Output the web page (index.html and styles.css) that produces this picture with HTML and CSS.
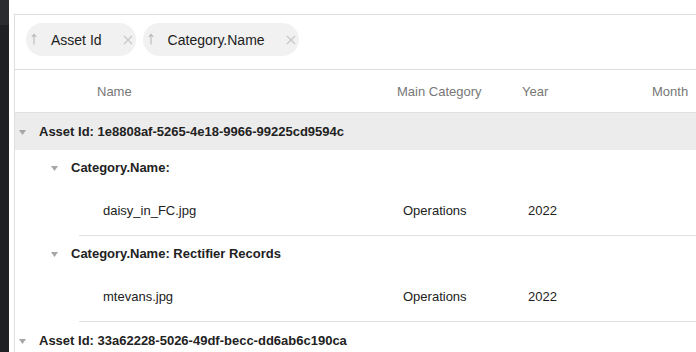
FILE: index.html
```html
<!DOCTYPE html>
<html>
<head>
<meta charset="utf-8">
<link rel="stylesheet" href="styles.css">
</head>
<body>
<div class="sidebar"><div class="sidebar-top"></div></div>
<div class="grid">
  <div class="group-panel">
    <div class="chip">
      <svg class="chip-arrow" width="6" height="12" viewBox="0 0 6 12"><path d="M3 1.5V11.5M0.8 4L3 1.3L5.2 4" fill="none" stroke="#b8b8b8" stroke-width="1.1"/></svg>
      <span class="chip-text">Asset Id</span>
      <svg class="chip-close" width="10" height="10" viewBox="0 0 10 10"><path d="M1 1L9 9M9 1L1 9" stroke="#c9c9c9" stroke-width="1.4"/></svg>
    </div>
    <div class="chip">
      <svg class="chip-arrow" width="6" height="12" viewBox="0 0 6 12"><path d="M3 1.5V11.5M0.8 4L3 1.3L5.2 4" fill="none" stroke="#b8b8b8" stroke-width="1.1"/></svg>
      <span class="chip-text">Category.Name</span>
      <svg class="chip-close" width="10" height="10" viewBox="0 0 10 10"><path d="M1 1L9 9M9 1L1 9" stroke="#c9c9c9" stroke-width="1.4"/></svg>
    </div>
  </div>
  <div class="header-row">
    <div class="indent"></div>
    <div class="col col-name">Name</div>
    <div class="col col-cat">Main Category</div>
    <div class="col col-year">Year</div>
    <div class="col col-month">Month</div>
  </div>
  <div class="group-row hovered">
    <svg class="tri" width="7" height="5" viewBox="0 0 7 5"><path d="M0 0H7L3.5 5Z" fill="#a6a6a6"/></svg>
    <span>Asset Id: 1e8808af-5265-4e18-9966-99225cd9594c</span>
  </div>
  <div class="subgroup-row">
    <svg class="tri" width="7" height="5" viewBox="0 0 7 5"><path d="M0 0H7L3.5 5Z" fill="#a6a6a6"/></svg>
    <span>Category.Name:</span>
  </div>
  <div class="data-row">
    <div class="dindent"></div>
    <div class="col col-name">daisy_in_FC.jpg</div>
    <div class="col col-cat">Operations</div>
    <div class="col col-year">2022</div>
    <div class="col col-month"></div>
  </div>
  <div class="subgroup-row">
    <svg class="tri" width="7" height="5" viewBox="0 0 7 5"><path d="M0 0H7L3.5 5Z" fill="#a6a6a6"/></svg>
    <span>Category.Name: Rectifier Records</span>
  </div>
  <div class="data-row">
    <div class="dindent"></div>
    <div class="col col-name">mtevans.jpg</div>
    <div class="col col-cat">Operations</div>
    <div class="col col-year">2022</div>
    <div class="col col-month"></div>
  </div>
  <div class="group-row">
    <svg class="tri" width="7" height="5" viewBox="0 0 7 5"><path d="M0 0H7L3.5 5Z" fill="#a6a6a6"/></svg>
    <span>Asset Id: 33a62228-5026-49df-becc-dd6ab6c190ca</span>
  </div>
</div>
</body>
</html>
```

FILE: styles.css
```css
* { box-sizing: border-box; }
html, body {
  margin: 0;
  padding: 0;
  width: 696px;
  height: 352px;
  overflow: hidden;
  background: #ffffff;
  font-family: "Liberation Sans", Arial, sans-serif;
}
body {
  display: flex;
  align-items: stretch;
}
.sidebar {
  width: 9px;
  flex: none;
  background: #1f2023;
}
.sidebar-top {
  height: 25px;
  background: #2b2c2f;
}
.grid {
  flex: 1;
  margin-left: 5px;
  margin-top: 14px;
  border-left: 1px solid #dedede;
  border-top: 1px solid #dedede;
  overflow: hidden;
  min-width: 0;
}
.group-panel {
  height: 55px;
  border-bottom: 1px solid #dedede;
  display: flex;
  align-items: flex-start;
  padding: 8px 0 0 11px;
  gap: 7px;
}
.chip {
  height: 33px;
  border-radius: 17px;
  background: #f1f1f1;
  display: flex;
  align-items: center;
  padding: 0 3px 0 5px;
  font-size: 14px;
  color: #212121;
  white-space: nowrap;
}
.chip-arrow { flex: none; margin-top: -2px; }
.chip-text { margin-left: 14px; }
.chip-close { flex: none; margin-left: 21px; }
.header-row {
  height: 43px;
  border-bottom: 1px solid #e0e0e0;
  display: flex;
  align-items: center;
  font-size: 13px;
  color: #777777;
  white-space: nowrap;
}
.indent { width: 76px; flex: none; }
.col { flex: none; padding-left: 6px; }
.col-name { width: 300px; }
.col-cat { width: 125px; }
.col-year { width: 130px; }
.col-month { width: 100px; }
.group-row {
  height: 37px;
  display: flex;
  align-items: center;
  padding-left: 4px;
  font-size: 13px;
  font-weight: bold;
  color: #222222;
  white-space: nowrap;
}
.group-row.hovered { background: #ececec; }
.group-row .tri { margin-right: 13px; margin-top: 1px; }
.subgroup-row {
  height: 35px;
  display: flex;
  align-items: center;
  padding-left: 36px;
  font-size: 13px;
  font-weight: bold;
  color: #222222;
  white-space: nowrap;
}
.subgroup-row .tri { margin-right: 13px; margin-top: 1px; }
.data-row {
  height: 51px;
  margin-left: 64px;
  border-bottom: 1px solid #e0e0e0;
  display: flex;
  align-items: center;
  font-size: 13px;
  color: #222222;
  white-space: nowrap;
}
.dindent { width: 12px; flex: none; }
.data-row .col { padding-left: 12px; }
.data-row .col-name { width: 300px; }
```
